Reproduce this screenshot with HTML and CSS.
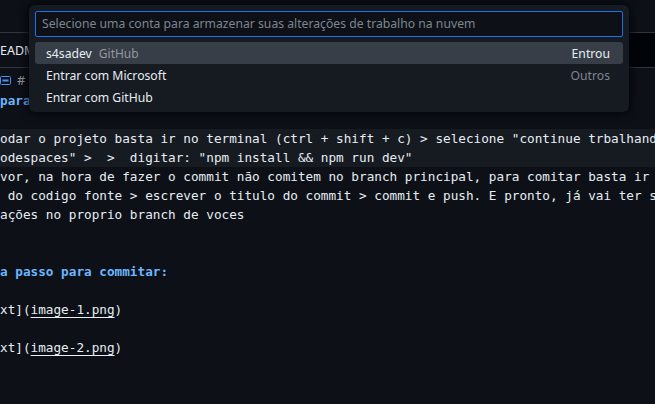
FILE: index.html
```html
<!DOCTYPE html>
<html lang="pt">
<head>
<meta charset="utf-8">
<link rel="stylesheet" href="styles.css">
</head>
<body>
<div class="window">
  <div class="titlebar"></div>
  <div class="tabs">
    <div class="tab active">EADME.md</div>
  </div>
  <div class="breadcrumbs">
    <span class="crumb-icon"><svg width="11" height="9" viewBox="0 0 11 9"><rect x="0.5" y="0.5" width="10" height="8" rx="1" fill="none" stroke="#4493f8" stroke-width="1"/><rect x="2.5" y="3.5" width="6" height="2" fill="#4493f8"/></svg></span>
    <span class="crumb-hash">#</span>
    <span class="crumb-text">[</span>
  </div>
  <div class="editor">
    <div class="line heading">para</div>
    <div class="line"></div>
    <div class="line current">odar o projeto basta ir no terminal (ctrl + shift + c) &gt; selecione "continue trbalhando no codespaces"</div>
    <div class="line current">odespaces" &gt;  &gt;  digitar: "npm install &amp;&amp; npm run dev"</div>
    <div class="line">vor, na hora de fazer o commit não comitem no branch principal, para comitar basta ir no controle</div>
    <div class="line"> do codigo fonte &gt; escrever o titulo do commit &gt; commit e push. E pronto, já vai ter suas</div>
    <div class="line">ações no proprio branch de voces</div>
    <div class="line"></div>
    <div class="line"></div>
    <div class="line heading">a passo para commitar:</div>
    <div class="line"></div>
    <div class="line">xt](<span class="link">image-1.png</span>)</div>
    <div class="line"></div>
    <div class="line">xt](<span class="link">image-2.png</span>)</div>
  </div>
</div>

<div class="quickpick">
  <div class="qp-input">Selecione uma conta para armazenar suas alterações de trabalho na nuvem</div>
  <div class="qp-list">
    <div class="qp-row selected"><span class="qp-label">s4sadev</span><span class="qp-desc">GitHub</span><span class="qp-sep selected-sep">Entrou</span></div>
    <div class="qp-row"><span class="qp-label">Entrar com Microsoft</span><span class="qp-sep">Outros</span></div>
    <div class="qp-row"><span class="qp-label">Entrar com GitHub</span></div>
  </div>
</div>
</body>
</html>
```

FILE: styles.css
```css
html, body {
  margin: 0;
  padding: 0;
}
body {
  width: 655px;
  height: 404px;
  overflow: hidden;
  background: #0d1117;
  position: relative;
  font-family: "Noto Sans", "Open Sans", sans-serif;
}
.window {
  display: flex;
  flex-direction: column;
}
.titlebar {
  height: 32px;
  background: #0d1117;
  border-bottom: 1px solid #30363d;
}
.tabs {
  height: 34px;
  background: #010409;
  border-bottom: 1px solid #30363d;
  display: flex;
}
.tab {
  width: 200px;
  display: flex;
  align-items: center;
  font-size: 12.5px;
  color: #e6edf3;
  padding-top: 1px;
}
.tab.active {
  background: #0d1117;
}
.breadcrumbs {
  height: 23px;
  display: flex;
  align-items: center;
  gap: 6px;
  font-size: 13px;
  color: #9198a1;
}
.crumb-icon {
  display: flex;
  margin-top: 1px;
}
.crumb-hash {
  color: #9198a1;
}
.crumb-text {
  color: #9198a1;
}
.editor {
  font-family: "DejaVu Sans Mono", "Liberation Mono", monospace;
  font-size: 12.7px;
  color: #e6edf3;
}
.line {
  height: 19px;
  line-height: 19px;
  white-space: pre;
  overflow: hidden;
}
.line.current {
  background: #161b22;
}
.heading {
  color: #6cb6ff;
  font-weight: bold;
}
.link {
  text-decoration: underline;
  text-underline-offset: 3px;
}

.quickpick {
  position: absolute;
  left: 29px;
  top: 5px;
  width: 600px;
  height: 107px;
  box-sizing: border-box;
  background: #161b22;
  border-radius: 6px;
  box-shadow: 0 0 8px 2px rgba(1, 4, 9, 0.85);
  padding: 6px 6px 0 6px;
  display: flex;
  flex-direction: column;
  gap: 5px;
}
.qp-input {
  height: 26px;
  box-sizing: border-box;
  border: 1px solid #1f6feb;
  border-radius: 2px;
  background: #0d1117;
  color: #7d8590;
  font-size: 12.2px;
  line-height: 24px;
  padding-left: 6px;
  white-space: nowrap;
  overflow: hidden;
}
.qp-list {
  display: flex;
  flex-direction: column;
}
.qp-row {
  height: 22px;
  display: flex;
  align-items: center;
  padding: 0 13px 0 11px;
  font-size: 12.2px;
  color: #e6edf3;
  border-radius: 3px;
}
.qp-row.selected {
  background: #373e47;
}
.qp-desc {
  margin-left: 7px;
  color: #9198a1;
  font-size: 12px;
}
.qp-sep {
  margin-left: auto;
  color: #7d8590;
}
.qp-sep.selected-sep {
  color: #e6edf3;
}
```
